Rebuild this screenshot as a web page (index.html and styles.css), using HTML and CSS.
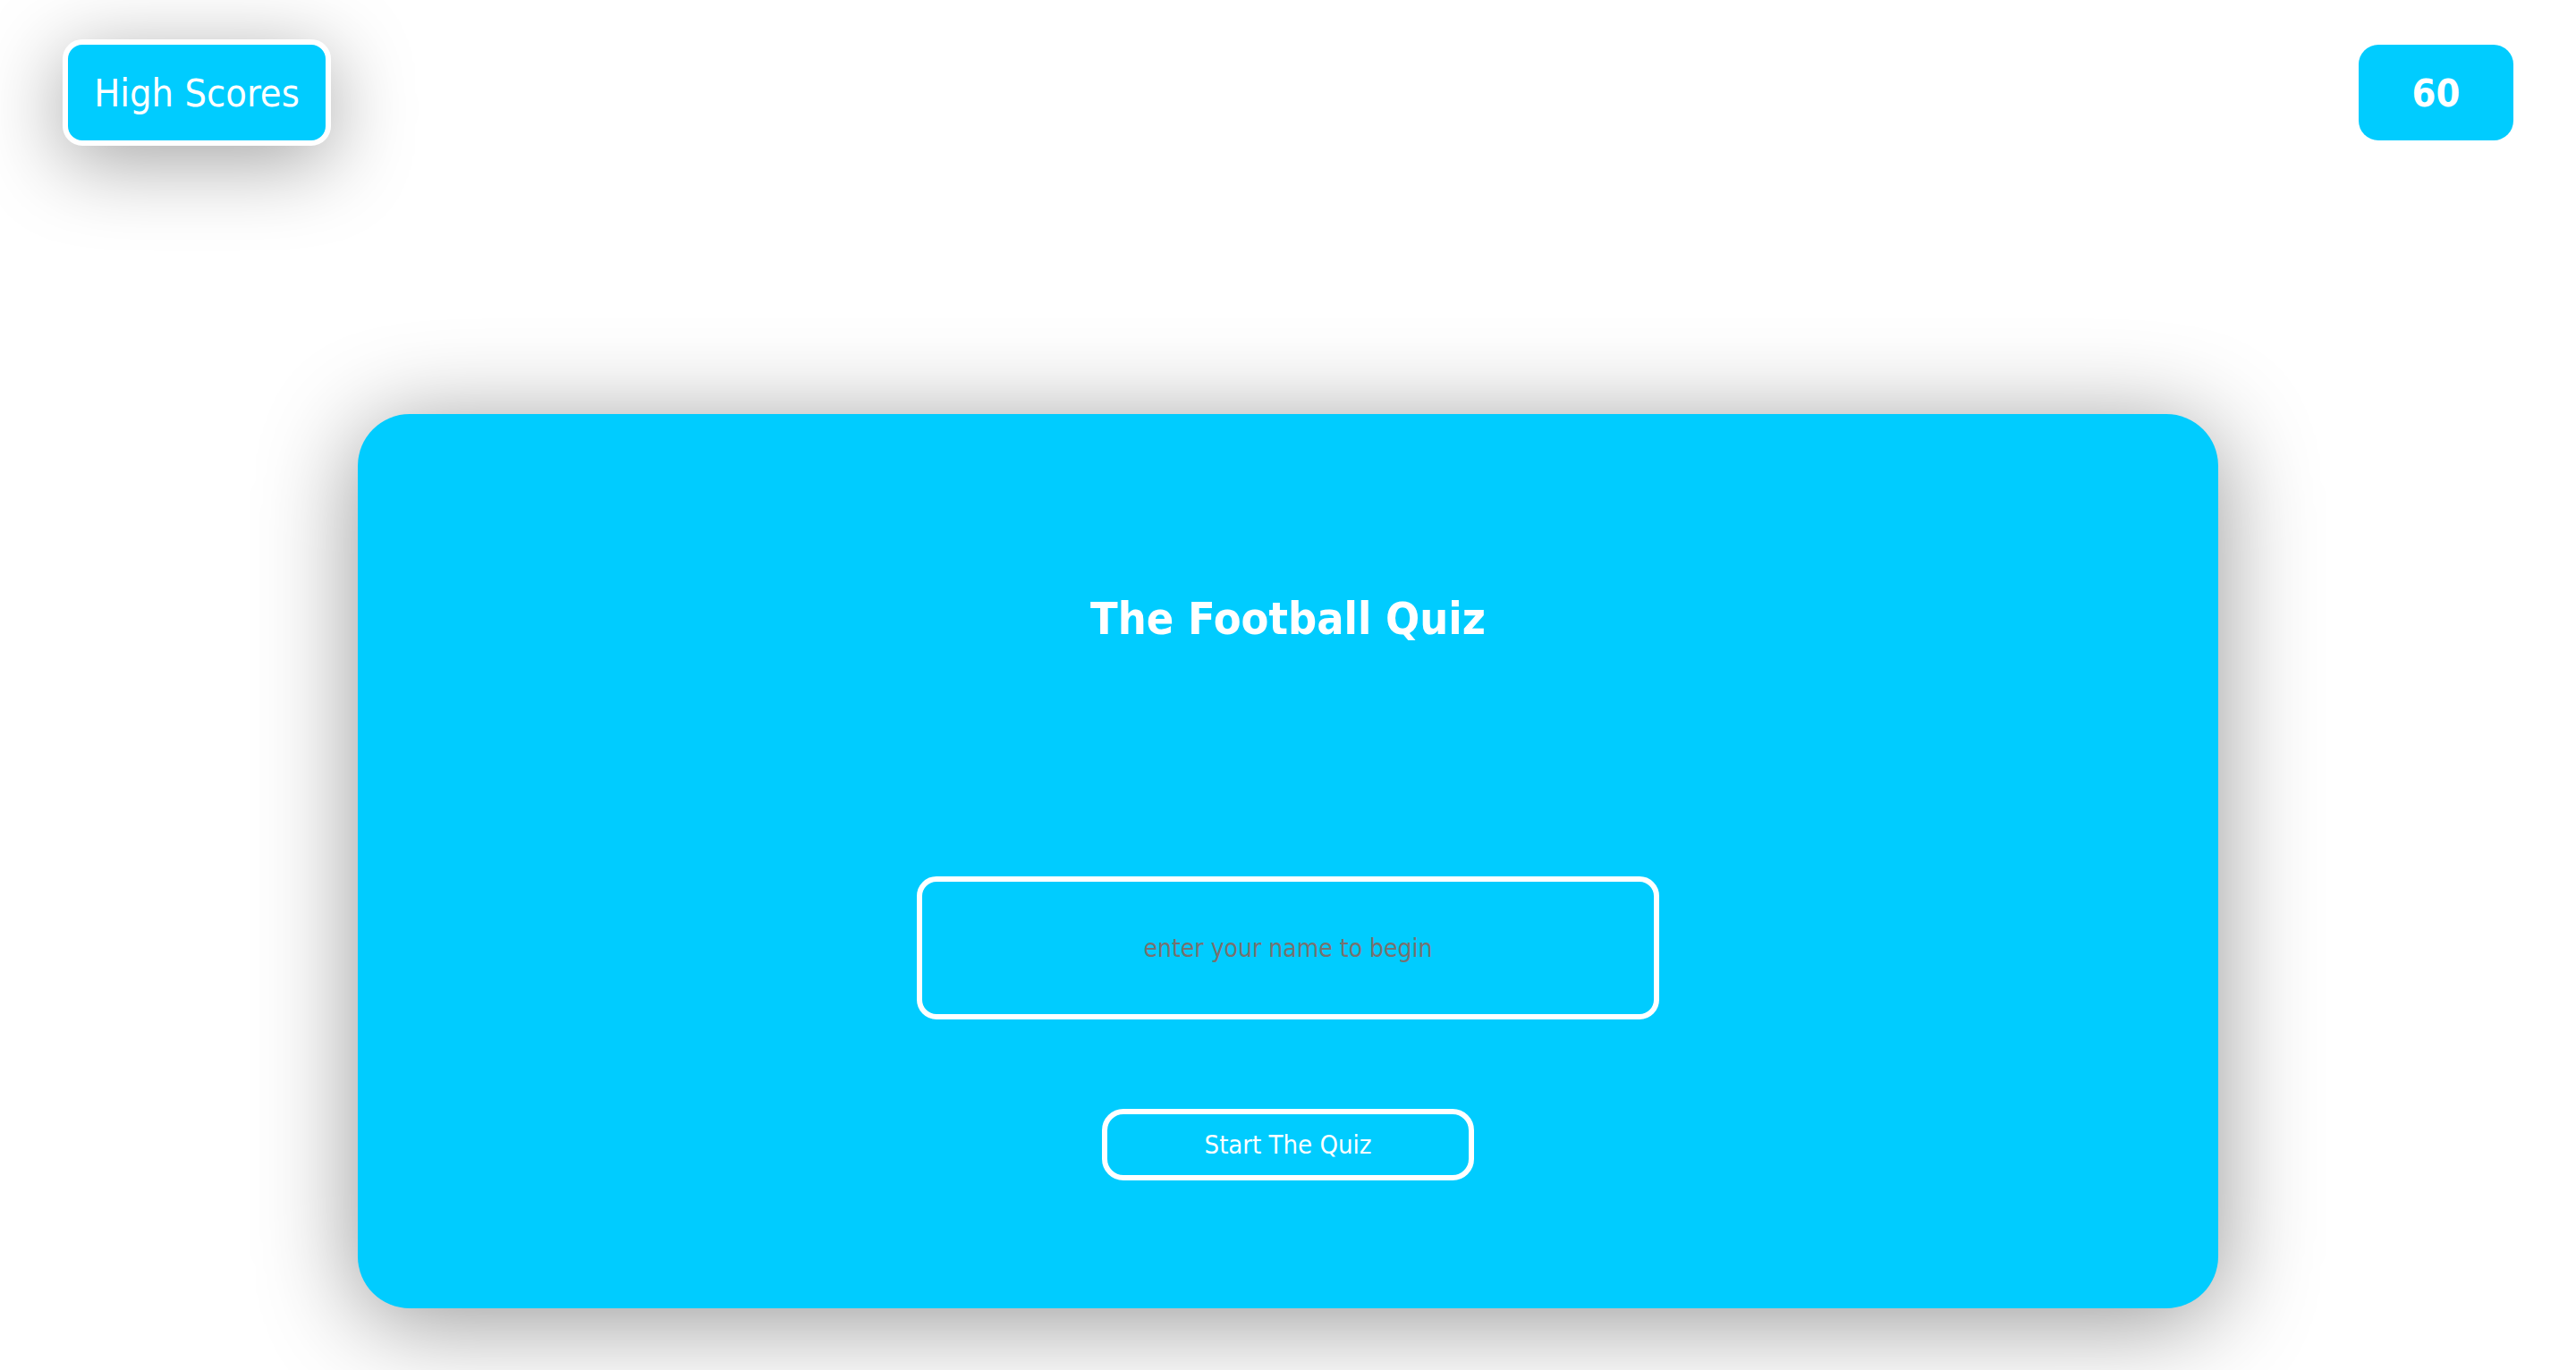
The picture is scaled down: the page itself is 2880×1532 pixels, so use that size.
FILE: index.html
```html
<!DOCTYPE html>
<html lang="en">
<head>
<meta charset="utf-8">
<title>The Football Quiz</title>
<link rel="stylesheet" href="styles.css">
</head>
<body>
  <header class="top-bar">
    <button class="high-scores">High Scores</button>
    <div class="timer">60</div>
  </header>
  <main class="quiz-card">
    <h1 class="quiz-title">The Football Quiz</h1>
    <input class="name-input" type="text" placeholder="enter your name to begin">
    <button class="start-btn">Start The Quiz</button>
  </main>
</body>
</html>
```

FILE: styles.css
```css
html, body {
  margin: 0;
  padding: 0;
  background: #ffffff;
}

body {
  font-family: "DejaVu Sans Condensed", "DejaVu Sans", "Liberation Sans", sans-serif;
  font-stretch: condensed;
  min-height: 1532px;
  overflow: hidden;
}

.top-bar {
  display: flex;
  justify-content: space-between;
  align-items: flex-start;
  padding: 44px 70px 0 70px;
}

.high-scores {
  box-sizing: border-box;
  width: 300px;
  height: 119px;
  background: #00ccff;
  color: #ffffff;
  border: 6px solid #ffffff;
  border-radius: 22px;
  font-family: inherit;
  font-stretch: condensed;
  font-size: 43px;
  padding: 0;
  box-shadow: 0 18px 90px rgba(0, 0, 0, 0.36);
}

.timer {
  box-sizing: border-box;
  margin-top: 6px;
  width: 173px;
  height: 107px;
  background: #00ccff;
  color: #ffffff;
  border-radius: 22px;
  font-size: 43px;
  font-weight: bold;
  display: flex;
  align-items: center;
  justify-content: center;
}

.quiz-card {
  box-sizing: border-box;
  width: 2080px;
  height: 1000px;
  margin: 300px auto 0 auto;
  background: #00ccff;
  border-radius: 58px;
  box-shadow: 0 14px 110px rgba(0, 0, 0, 0.42);
  display: flex;
  flex-direction: column;
  align-items: center;
  padding-top: 198px;
}

.quiz-title {
  margin: 0;
  color: #ffffff;
  font-size: 50px;
  font-weight: bold;
  line-height: 62px;
}

.name-input {
  box-sizing: border-box;
  margin-top: 257px;
  width: 830px;
  height: 160px;
  background: #00ccff;
  border: 6px solid #ffffff;
  border-radius: 22px;
  outline: none;
  text-align: center;
  font-family: inherit;
  font-stretch: condensed;
  font-size: 28px;
  color: #ffffff;
}

.name-input::placeholder {
  color: #78716f;
  opacity: 1;
}

.start-btn {
  box-sizing: border-box;
  margin-top: 100px;
  width: 416px;
  height: 80px;
  background: #00ccff;
  border: 6px solid #ffffff;
  border-radius: 24px;
  color: #ffffff;
  font-family: inherit;
  font-stretch: condensed;
  font-size: 29px;
  padding: 0;
}
```
